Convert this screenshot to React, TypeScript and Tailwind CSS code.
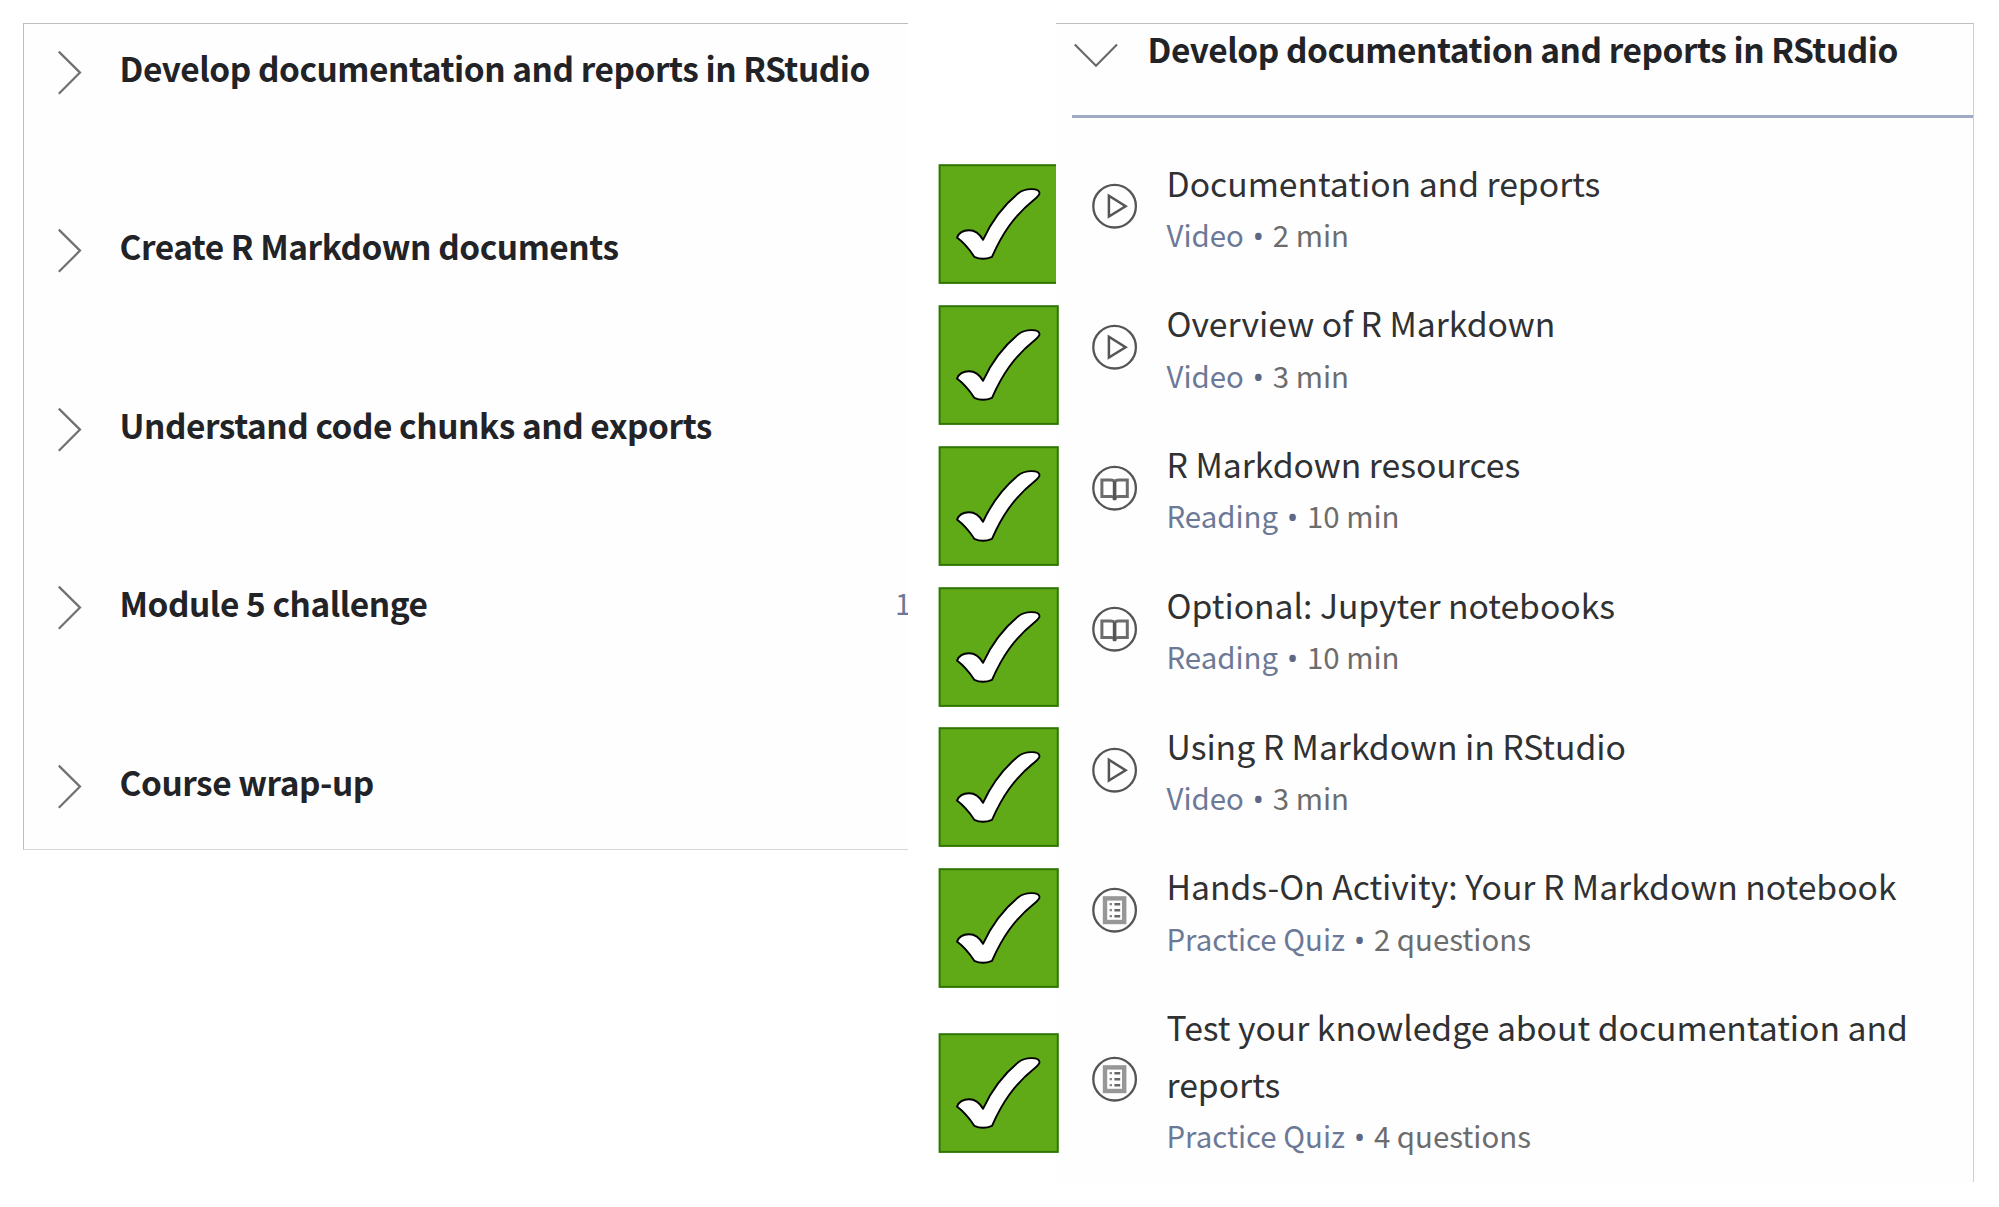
type IconKind = "video" | "reading" | "quiz";

type Item = { kind: IconKind; title: string; type: string; detail: string };

const sections: { title: string; count?: string }[] = [
  { title: "Develop documentation and reports in RStudio" },
  { title: "Create R Markdown documents" },
  { title: "Understand code chunks and exports" },
  { title: "Module 5 challenge", count: "1" },
  { title: "Course wrap-up" },
];

const items: Item[] = [
  { kind: "video", title: "Documentation and reports", type: "Video", detail: "2 min" },
  { kind: "video", title: "Overview of R Markdown", type: "Video", detail: "3 min" },
  { kind: "reading", title: "R Markdown resources", type: "Reading", detail: "10 min" },
  { kind: "reading", title: "Optional: Jupyter notebooks", type: "Reading", detail: "10 min" },
  { kind: "video", title: "Using R Markdown in RStudio", type: "Video", detail: "3 min" },
  { kind: "quiz", title: "Hands-On Activity: Your R Markdown notebook", type: "Practice Quiz", detail: "2 questions" },
  { kind: "quiz", title: "Test your knowledge about documentation and reports", type: "Practice Quiz", detail: "4 questions" },
];

function ItemIcon({ kind }: { kind: IconKind }) {
  return (
    <svg className="size-[46px] shrink-0" viewBox="0.4 -0.2 46 46" fill="none" stroke="#555" strokeWidth="2.3">
      <circle cx="23" cy="23" r="21.3" />
      {kind === "video" && <path d="M17.3 12.6V33.4L34 23Z" strokeWidth="2.5" />}
      {kind === "reading" && (
        <>
          <path d="M23 16.2C22 15 20.6 14.8 19 14.8H10.3V31.2H19.6C21.3 31.2 22.3 31.8 23 33" strokeWidth="3" stroke="#6c6c6c" />
          <path d="M23 16.2C24 15 25.4 14.8 27 14.8H35.7V31.2H26.4C24.7 31.2 23.7 31.8 23 33" strokeWidth="3" stroke="#6c6c6c" />
          <path d="M23 16V35" strokeWidth="3.6" />
        </>
      )}
      {kind === "quiz" && (
        <>
          <rect x="13.4" y="11.2" width="19.2" height="23.6" stroke="#979797" strokeWidth="4.4" />
          <path d="M18 17h2.4M18 23h2.4M18 29h2.4" stroke="#888" strokeWidth="2.2" />
          <path d="M22.8 17h5.8M22.8 23h5.8M22.8 29h5.8" stroke="#666" strokeWidth="2.4" />
        </>
      )}
    </svg>
  );
}

function Check({ clipped }: { clipped: boolean }) {
  return (
    <div className={clipped ? "h-[121px] w-[118px] overflow-hidden" : "h-[121px] w-[121px]"}>
      <svg className="h-[121px] w-[121px]" viewBox="0 0 121 121">
        <rect x="1.6" y="1.2" width="118.2" height="117.7" fill="#60a917" stroke="#2d7600" strokeWidth="2" />
        <path
          d="M19 73.6C21 68.5 25.5 66.3 31 66.3C37 66.3 42 70.5 45 75.8C53 58.5 65.5 41.5 80 29.5C85 25.5 90 25 94 25.1C98.5 25.2 101.3 26.8 101.5 29C101.5 31 99.5 32.8 97.5 34.4C76 51.5 64 70 54 92.8C48 95.4 41.5 95.2 36.3 92.8C31.5 85.5 25.5 78.5 19 73.6Z"
          fill="#fff"
          stroke="#000"
          strokeWidth="1.9"
          strokeLinejoin="round"
        />
      </svg>
    </div>
  );
}

function SectionList() {
  return (
    <section className="mt-[23px] h-[827px] w-[885px] shrink-0 overflow-hidden border-t border-b border-l border-t-[#bdbdbd] border-b-[#d6d6d6] border-l-[#bdbdbd] bg-[#fefefe]">
      {sections.map((s) => (
        <div key={s.title} className="flex h-[178.4px] items-start pl-[32px]">
          <svg className="mt-[25px] h-[48px] w-[26px] shrink-0" viewBox="0 0.2 26 48" fill="none" stroke="#707070" strokeWidth="2.2">
            <path d="M2.8 2.8L24 23.8L2.8 45" />
          </svg>
          <h2 className="ml-[37.5px] grow pt-[16px] text-[33.4px] leading-[56px] font-bold tracking-[-0.45px] whitespace-nowrap text-[#222326]">
            {s.title}
          </h2>
          {s.count && (
            <span className="w-[13px] shrink-0 pt-[15px] text-[29px] leading-[56px] whitespace-nowrap text-[#6c7996]">{s.count}</span>
          )}
        </div>
      ))}
    </section>
  );
}

function ItemList() {
  return (
    <section className="mt-[23px] h-[1159px] w-[918px] shrink-0 border-t border-r border-t-[#bdbdbd] border-r-[#cfcfcf] bg-[#fefefe]">
      <header className="ml-4 flex h-[94px] items-start border-b-[3px] border-[#9fabc6]">
        <svg className="mt-[17px] ml-px h-[27px] w-[46px]" viewBox="0 0 46 27" fill="none" stroke="#686868" strokeWidth="2.1">
          <path d="M1.8 3.5L23 24.7L44 3.5" />
        </svg>
        <h2 className="-mt-[3px] ml-[28.5px] text-[33.4px] leading-[56px] font-bold tracking-[-0.45px] whitespace-nowrap text-[#222326]">
          Develop documentation and reports in RStudio
        </h2>
      </header>
      <ul className="mt-[36.5px] ml-[36px] flex flex-col gap-[37.1px]">
        {items.map((it) => (
          <li key={it.title} className="flex items-center">
            <ItemIcon kind={it.kind} />
            <div className="ml-[28.5px] w-[750px]">
              <h3 className="text-[33.7px] leading-[56.5px] tracking-[-0.02px] text-[#303133]">{it.title}</h3>
              <p className="-mt-[0.2px] flex h-[47.4px] text-[29.4px] leading-[47.5px] whitespace-nowrap text-[#6c6c6c]">
                <span className="text-[#6c7996]">{it.type}</span>
                <span className="mt-[2px] w-[29px] text-center font-['Noto_Sans'] text-[#5d6885]">•</span>
                <span>{it.detail}</span>
              </p>
            </div>
          </li>
        ))}
      </ul>
    </section>
  );
}

export default function App() {
  return (
    <main className="flex h-[1207px] w-[1999px] items-start overflow-hidden bg-white pl-[23px] font-['Noto_Sans_CJK_SC','Noto_Sans',sans-serif]">
      <SectionList />
      <div className="z-10 mt-[164px] -mr-[3px] ml-[30px] flex w-[121px] shrink-0 flex-col gap-[19.85px]">
        {items.map((it, i) => (
          <div key={it.title} className={i === items.length - 1 ? "mt-[23.5px]" : ""}>
            <Check clipped={i === 0} />
          </div>
        ))}
      </div>
      <ItemList />
    </main>
  );
}
